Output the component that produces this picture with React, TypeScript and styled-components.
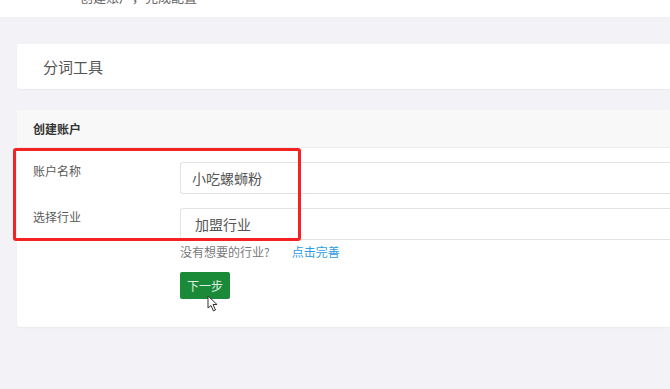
import { createGlobalStyle, styled } from "styled-components";

const GlobalStyle = createGlobalStyle`
  html, body {
    margin: 0;
    padding: 0;
    background: #f3f3f7;
    overflow: hidden;
    font-family: "Noto Sans CJK SC", "Noto Sans", sans-serif;
  }
`;

const Page = styled.div`
  width: 670px;
  height: 389px;
  display: flex;
  flex-direction: column;
`;

const TopBar = styled.div`
  height: 17px;
  background: #ffffff;
  overflow: hidden;
  padding-left: 80px;
`;

const TopText = styled.div`
  margin-top: -11px;
  font-size: 13px;
  line-height: 16px;
  color: #666;
`;

const Main = styled.div`
  display: flex;
  flex-direction: column;
  gap: 21px;
  padding: 27px 0 0 17px;
`;

const Card = styled.div`
  background: #ffffff;
  border-radius: 3px 0 0 3px;
  box-shadow: 0 1px 2px rgba(0, 0, 0, 0.04);
  position: relative;
`;

const TitleCard = styled(Card)`
  height: 45px;
  display: flex;
  align-items: center;
  padding-left: 26px;
  font-size: 15px;
  color: #555;
`;

const CardHeader = styled.div`
  height: 37px;
  display: flex;
  align-items: center;
  padding-left: 16px;
  background: #f8f8f8;
  border-bottom: 1px solid #ededed;
  font-size: 12px;
  font-weight: bold;
  color: #333;
`;

const CardBody = styled.div`
  display: flex;
  flex-direction: column;
  padding: 14px 0 28px 16px;
`;

const FormRow = styled.div<{ $gap?: number }>`
  display: flex;
  margin-bottom: ${(p) => p.$gap ?? 0}px;
`;

const Label = styled.div`
  width: 147px;
  flex-shrink: 0;
  padding-top: 1px;
  font-size: 12px;
  line-height: 16px;
  color: #5a5a5a;
`;

const Input = styled.div<{ $indent?: number }>`
  flex: 1;
  height: 32px;
  box-sizing: border-box;
  border: 1px solid #e3e3e3;
  border-right: none;
  border-radius: 3px 0 0 3px;
  display: flex;
  align-items: center;
  padding-left: ${(p) => p.$indent ?? 11}px;
  font-size: 14px;
  color: #555;
`;

const Help = styled.div`
  margin: 4px 0 0 147px;
  display: flex;
  gap: 22px;
  font-size: 12px;
  line-height: 15px;
  color: #7a7a7a;
`;

const Link = styled.a`
  color: #2d9be6;
  text-decoration: none;
`;

const NextButton = styled.button`
  margin: 13px 0 0 147px;
  width: 50px;
  height: 27px;
  border: none;
  border-radius: 2px;
  background: #1b8a38;
  color: #dff0e2;
  font-family: inherit;
  font-size: 12px;
  padding: 0;
`;

const Highlight = styled.div`
  position: absolute;
  left: -4px;
  top: 38px;
  width: 288px;
  height: 93px;
  box-sizing: border-box;
  border: 3px solid #f42222;
  border-radius: 3px;
  pointer-events: none;
`;

const Cursor = styled.svg`
  position: absolute;
  left: 190px;
  top: 185px;
`;

export default function App() {
  return (
    <Page>
      <GlobalStyle />
      <TopBar>
        <TopText>创建账户，完成配置</TopText>
      </TopBar>
      <Main>
        <TitleCard>分词工具</TitleCard>
        <Card>
          <CardHeader>创建账户</CardHeader>
          <CardBody>
            <FormRow $gap={14}>
              <Label>账户名称</Label>
              <Input>小吃螺蛳粉</Input>
            </FormRow>
            <FormRow>
              <Label>选择行业</Label>
              <Input $indent={14}>加盟行业</Input>
            </FormRow>
            <Help>
              <span>没有想要的行业?</span>
              <Link href="#">点击完善</Link>
            </Help>
            <div>
              <NextButton>下一步</NextButton>
            </div>
          </CardBody>
          <Highlight />
          <Cursor width="12" height="17" viewBox="0 0 12 17">
            <path
              d="M1 1 L1 13 L4 10.5 L6.5 16 L8.5 15 L6 9.5 L10 9.5 Z"
              fill="#ffffff"
              stroke="#333"
              strokeWidth="1"
              strokeLinejoin="round"
            />
          </Cursor>
        </Card>
      </Main>
    </Page>
  );
}
